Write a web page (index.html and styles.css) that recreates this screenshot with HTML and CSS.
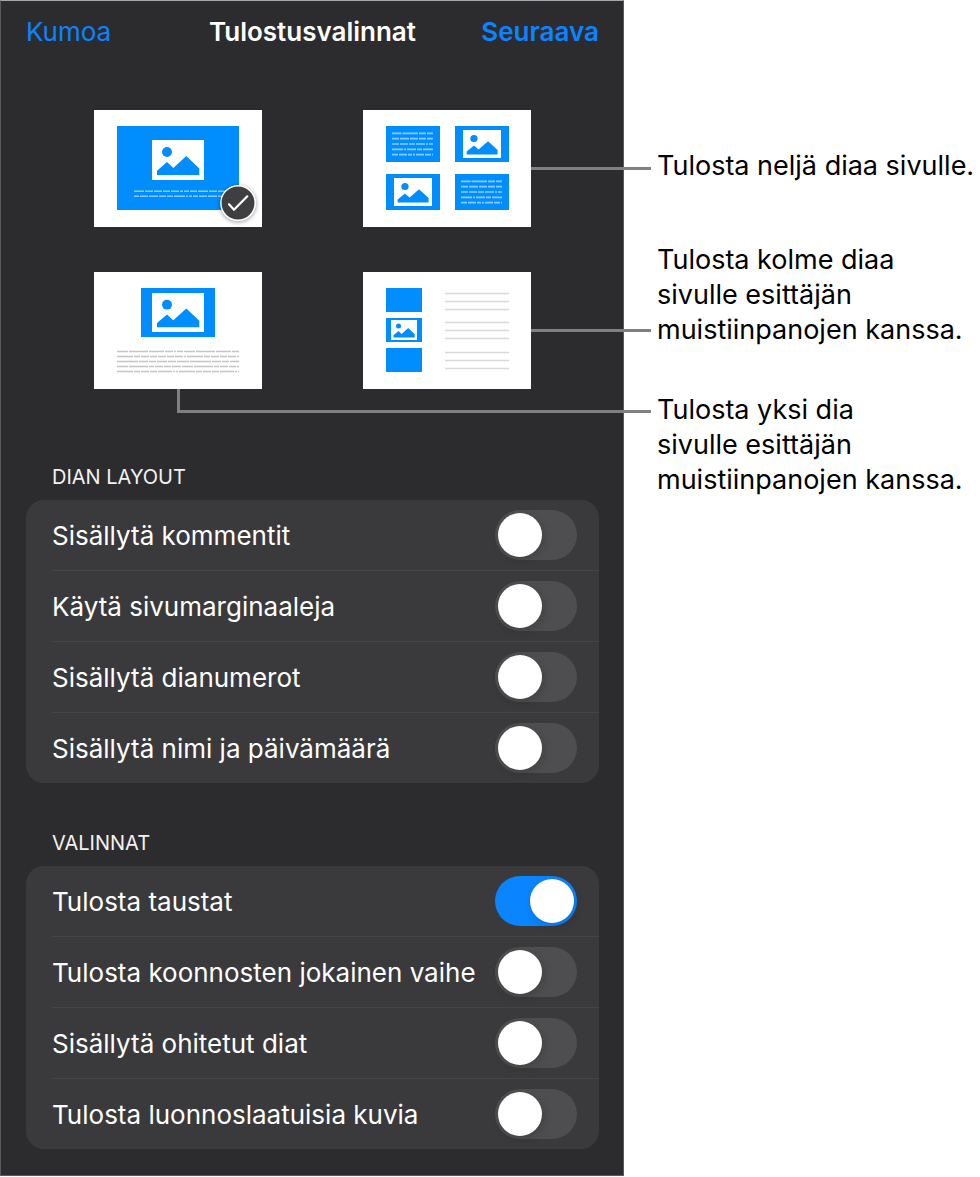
FILE: index.html
```html
<!DOCTYPE html>
<html lang="fi">
<head>
    <meta charset="UTF-8">
    <meta name="viewport" content="width=device-width, initial-scale=1.0">
    <title>Tulostusvalinnat</title>
    <link rel="stylesheet" href="styles.css">
</head>
<body>
    <!-- shared shapes -->
    <svg class="defs" width="0" height="0" aria-hidden="true">
        <symbol id="pic" viewBox="0 0 52 40" preserveAspectRatio="none">
            <rect width="52" height="40" fill="#fff"/>
            <circle cx="15" cy="12" r="5" fill="#008eff"/>
            <path d="M5 35v-4.300l10-8.700 6.300 6L34.300 16l13 12.500V35z" fill="#008eff"/>
        </symbol>
        <symbol id="textcell" viewBox="0 0 54 36">
            <rect width="54" height="36" fill="#008eff"/>
            <g stroke="#8fcaff" stroke-width="1.700">
                <path d="M6 7.300h41" stroke-dasharray="9.500 1 15.500 1 7 1"/>
                <path d="M6 12.600h41" stroke-dasharray="7 1 9 1 8 1 7 1"/>
                <path d="M6 18h41" stroke-dasharray="7 1 8 1 6 1 9 1 2 1"/>
                <path d="M6 23.300h41" stroke-dasharray="11 1 2 1 9 1 5 1"/>
                <path d="M6 28.600h41" stroke-dasharray="6 1 8 1 4 1 2 1 8 1"/>
            </g>
        </symbol>
        <symbol id="check" viewBox="0 0 36 36">
            <circle cx="18" cy="18" r="17.200" fill="#3f3f41" stroke="#fff" stroke-width="1.500"/>
            <path d="M9 19.300l5 5.500L27.300 11.300" fill="none" stroke="#fff" stroke-width="2.200" stroke-linecap="round" stroke-linejoin="round"/>
        </symbol>
    </svg>

    <main class="page">
        <form class="panel">
            <header class="bar">
                <button type="button" class="bar-btn">Kumoa</button>
                <h1>Tulostusvalinnat</h1>
                <button type="button" class="bar-btn next">Seuraava</button>
            </header>

            <div class="layouts">
                <label class="thumb">
                    <input type="radio" name="layout" aria-label="Yksi dia" checked>
                    <svg viewBox="0 0 168 117">
                        <rect x="23" y="16" width="122" height="84" fill="#008eff"/>
                        <use href="#pic" x="58" y="30" width="52" height="40"/>
                        <g stroke="#8fcaff" stroke-width="1.500">
                            <path d="M40 81.300h94" stroke-dasharray="10 1 8 1 8 1 7 1 8 1 3 1 5 1 7 1"/>
                            <path d="M40 86.300h94" stroke-dasharray="5 1 8 1 9 1 7 1 6 1 11 1 2 1 3 1"/>
                        </g>
                    </svg>
                    <svg class="badge"><use href="#check"/></svg>
                </label>
                <label class="thumb lead">
                    <input type="radio" name="layout" aria-label="Neljä diaa">
                    <svg viewBox="0 0 168 117">
                        <use href="#textcell" x="23" y="16" width="54" height="36"/>
                        <rect x="92" y="16" width="54" height="36" fill="#008eff"/>
                        <use href="#pic" x="100" y="20" width="38" height="28"/>
                        <rect x="23" y="64" width="54" height="36" fill="#008eff"/>
                        <use href="#pic" x="31" y="68" width="38" height="28"/>
                        <use href="#textcell" x="92" y="64" width="54" height="36"/>
                    </svg>
                    <svg class="badge"><use href="#check"/></svg>
                </label>
                <label class="thumb">
                    <input type="radio" name="layout" aria-label="Yksi dia ja esittäjän muistiinpanot">
                    <svg viewBox="0 0 168 117">
                        <rect x="47" y="16" width="74" height="49" fill="#008eff"/>
                        <use href="#pic" x="58" y="21" width="52" height="39"/>
                        <g stroke="#c4c4c4" stroke-width="1.700">
                            <path d="M23 79.500h122" stroke-dasharray="11 1 19 1 15 1 8 1 2 1 6 1"/>
                            <path d="M23 84.500h122" stroke-dasharray="16 1 6 1 8 1 7 1 8 1 7 1 8 1 2 1"/>
                            <path d="M23 89.500h122" stroke-dasharray="21 1 9 1 7 1 10 1 8 1 12 1"/>
                            <path d="M23 94.500h122" stroke-dasharray="11 1 19 1 5 1 8 1 7 1 9 1"/>
                            <path d="M23 99.500h122" stroke-dasharray="16 1 6 1 8 1 7 1 14 1 2 1 2 1"/>
                        </g>
                    </svg>
                    <svg class="badge"><use href="#check"/></svg>
                </label>
                <label class="thumb lead">
                    <input type="radio" name="layout" aria-label="Kolme diaa ja esittäjän muistiinpanot">
                    <svg viewBox="0 0 168 117">
                        <g fill="#008eff">
                            <rect x="23" y="16" width="36" height="24"/>
                            <rect x="23" y="46" width="36" height="24"/>
                            <rect x="23" y="76" width="36" height="24"/>
                        </g>
                        <use href="#pic" x="28" y="48" width="26" height="20"/>
                        <path d="M82 21.500h64M82 29.500h64M82 37.500h64M82 50.500h64M82 58.500h64M82 66.500h64M82 80.500h64M82 88.500h64M82 96.500h64" stroke="#dadada" stroke-width="1.700"/>
                    </svg>
                    <svg class="badge"><use href="#check"/></svg>
                </label>
            </div>

            <section class="group">
                <h2>DIAN LAYOUT</h2>
                <div class="card">
                    <label class="row"><span>Sisällytä kommentit</span><input type="checkbox" class="switch"></label>
                    <label class="row"><span>Käytä sivumarginaaleja</span><input type="checkbox" class="switch"></label>
                    <label class="row"><span>Sisällytä dianumerot</span><input type="checkbox" class="switch"></label>
                    <label class="row"><span>Sisällytä nimi ja päivämäärä</span><input type="checkbox" class="switch"></label>
                </div>
            </section>

            <section class="group">
                <h2>VALINNAT</h2>
                <div class="card">
                    <label class="row"><span>Tulosta taustat</span><input type="checkbox" class="switch" checked></label>
                    <label class="row"><span>Tulosta koonnosten jokainen vaihe</span><input type="checkbox" class="switch"></label>
                    <label class="row"><span>Sisällytä ohitetut diat</span><input type="checkbox" class="switch"></label>
                    <label class="row"><span>Tulosta luonnoslaatuisia kuvia</span><input type="checkbox" class="switch"></label>
                </div>
            </section>
        </form>

        <aside class="notes">
            <p>Tulosta neljä diaa sivulle.</p>
            <p>Tulosta kolme diaa<br>sivulle esittäjän<br>muistiinpanojen kanssa.</p>
            <p>Tulosta yksi dia<br>sivulle esittäjän<br>muistiinpanojen kanssa.</p>
        </aside>
    </main>
</body>
</html>
```

FILE: styles.css
```css
*{
    margin: 0;
    padding: 0;
    box-sizing: border-box;
}
body{
    background: #fff;
    font-family: Inter, "Liberation Sans", sans-serif;
    font-size: 26px;
    color: #000;
}
.defs{
    position: absolute;
}
.page{
    display: flex;
    align-items: flex-start;
}

/* dark panel */
.panel{
    flex: 1;
    padding-bottom: 26px;
    background: #2c2c2e;
    border: 1px solid #59595b;
    border-top-color: #a4a8aa;
    color: #fff;
}
.bar{
    display: grid;
    grid-template-columns: 1fr auto 1fr;
    align-items: center;
    height: 60px;
    padding: 0 24px 0 25px;
}
.bar h1{
    font-size: 26px;
    font-weight: 600;
}
.bar-btn{
    justify-self: start;
    background: none;
    border: none;
    font: inherit;
    color: #0a84ff;
    cursor: pointer;
}
.bar-btn.next{
    justify-self: end;
    font-weight: 600;
}

/* layout thumbnails */
.layouts{
    position: relative;
    display: grid;
    grid-template-columns: 168px 168px;
    justify-content: space-between;
    row-gap: 45px;
    padding: 49px 92px 76px 93px;
}
.thumb{
    position: relative;
    height: 117px;
    background: #fff;
    cursor: pointer;
}
.thumb input{
    position: absolute;
    opacity: 0;
}
.thumb svg{
    display: block;
    width: 100%;
    height: 100%;
}
.thumb .badge{
    display: none;
    position: absolute;
    right: 6px;
    bottom: 6px;
    width: 36px;
    height: 36px;
    border-radius: 50%;
    box-shadow: 0 1px 4px rgba(0, 0, 0, 0.4);
}
.thumb input:checked ~ .badge{
    display: block;
}

/* leader lines */
.lead::after{
    content: "";
    position: absolute;
    top: 57px;
    left: 100%;
    width: 120px;
    height: 3px;
    background: #808080;
}
.layouts::after{
    content: "";
    position: absolute;
    left: 176px;
    right: -28px;
    bottom: 52px;
    height: 21px;
    border: solid #808080;
    border-width: 0 0 3px 3px;
}

/* option groups */
.group{
    padding: 0 24px 0 25px;
}
.group + .group{
    margin-top: 48px;
}
.group h2{
    margin-bottom: 11px;
    padding-left: 26px;
    font-size: 20px;
    line-height: 24px;
    font-weight: 400;
    color: #f2f2f2;
}
.card{
    padding-left: 26px;
    background: #3a3a3c;
    border-radius: 18px;
}
.row{
    display: flex;
    align-items: center;
    justify-content: space-between;
    min-height: 70px;
    padding-right: 22px;
    cursor: pointer;
}
.row + .row{
    min-height: 71px;
    border-top: 1px solid #454547;
}
.switch{
    appearance: none;
    flex: none;
    width: 82px;
    height: 50px;
    padding: 3px;
    border-radius: 25px;
    background: #4e4e50;
    cursor: pointer;
}
.switch::before{
    content: "";
    display: block;
    width: 44px;
    height: 44px;
    border-radius: 50%;
    background: #fff;
    box-shadow: 2px 3px 8px rgba(0, 0, 0, 0.15);
}
.switch:checked{
    background: #0a84ff;
}
.switch:checked::before{
    margin-left: auto;
}

/* callouts */
.notes{
    flex: none;
    width: 356px;
    padding: 148px 0 0 33px;
    font-size: 27px;
    line-height: 35px;
}
.notes p{
    white-space: nowrap;
}
.notes p:nth-child(2){
    margin: 59px 0 45px;
}
```
